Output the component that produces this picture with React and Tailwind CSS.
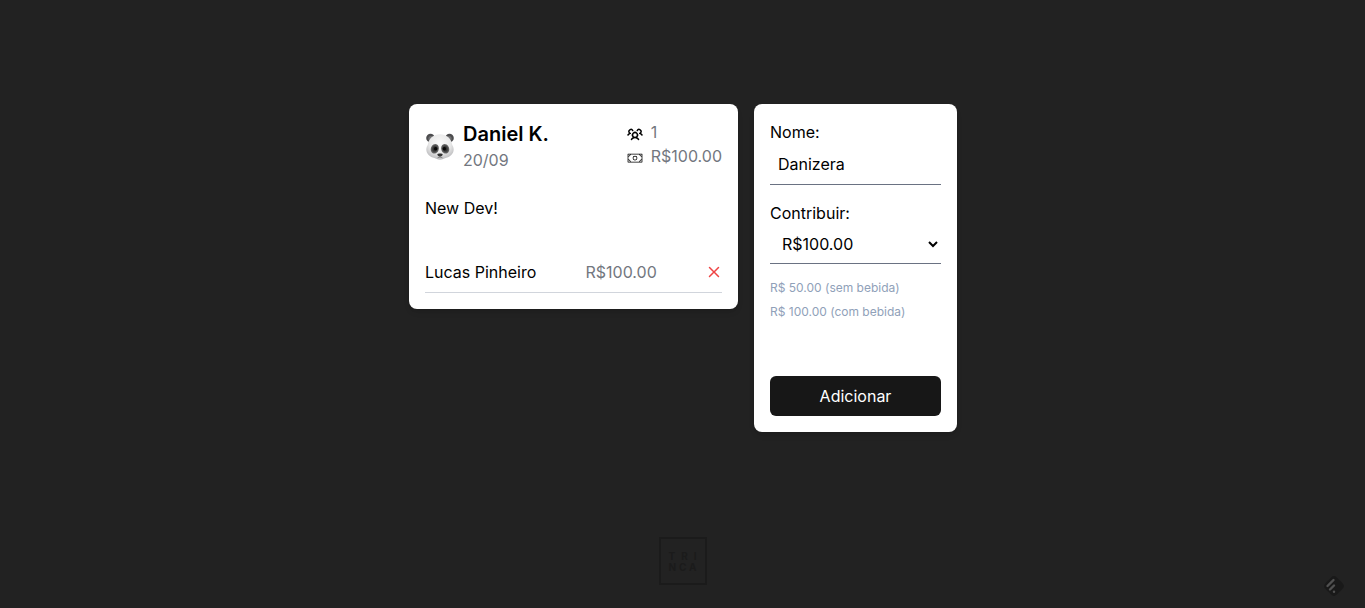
import { useState } from 'react';
import { PiUsersThreeBold, PiMoneyLight, PiXBold } from 'react-icons/pi';

function Panda() {
  return (
    <svg viewBox="0 0 30 30" className="size-[30px] shrink-0" role="img" aria-label="Panda">
      <defs>
        <radialGradient id="fur" cx="50%" cy="35%" r="65%">
          <stop offset="0" stopColor="#fafafa" />
          <stop offset="0.6" stopColor="#e8e8e8" />
          <stop offset="1" stopColor="#bcbcbe" />
        </radialGradient>
        <radialGradient id="patch">
          <stop offset="0" stopColor="#1a1a1a" />
          <stop offset="0.5" stopColor="#3a3a3a" />
          <stop offset="1" stopColor="#707070" />
        </radialGradient>
      </defs>
      <circle cx="5.5" cy="7" r="4.3" fill="#4c4c4e" />
      <circle cx="24.5" cy="7" r="4.3" fill="#4c4c4e" />
      <circle cx="6" cy="7.5" r="2.6" fill="#707072" />
      <circle cx="24" cy="7.5" r="2.6" fill="#707072" />
      <path d="M15 3.200C21.500 3.200 26.200 7.500 27 13c.3 1.600 1.700 3 1.700 5.200 0 4.600-3.700 7.900-8.100 8.700-1.600.3-3.100 1.800-5.600 1.800s-4-1.500-5.600-1.800C5 26.100 1.300 22.800 1.300 18.200c0-2.200 1.400-3.600 1.700-5.200C3.800 7.500 8.500 3.200 15 3.200z" fill="url(#fur)" />
      <ellipse cx="9.800" cy="17.800" rx="4" ry="4.900" fill="url(#patch)" transform="rotate(20 9.800 17.800)" />
      <ellipse cx="20.200" cy="17.800" rx="4" ry="4.900" fill="url(#patch)" transform="rotate(-20 20.200 17.800)" />
      <circle cx="10.700" cy="17.800" r="1.700" fill="#050505" />
      <circle cx="19.300" cy="17.800" r="1.700" fill="#050505" />
      <path d="M12.300 23.300c0-1.200 5.400-1.200 5.400 0 0 1.300-1.700 2.500-2.700 2.500s-2.700-1.200-2.700-2.500z" fill="#333" />
      <path d="M12.500 26.800q2.500-1.300 5 0" stroke="#777" strokeWidth="0.800" fill="none" />
    </svg>
  );
}

function EventCard() {
  return (
    <section className="rounded-lg bg-white p-4 shadow-md">
      <header className="flex items-start justify-between">
        <div className="flex items-center gap-2">
          <Panda />
          <div>
            <h1 className="text-xl font-semibold">Daniel K.</h1>
            <p className="text-[#737780]">20/09</p>
          </div>
        </div>
        <div className="text-[#737780]">
          <p className="flex items-center gap-2">
            <PiUsersThreeBold className="mt-1 size-4 text-black" aria-label="Participantes" />1
          </p>
          <p className="flex items-center gap-2">
            <PiMoneyLight className="mt-1 size-4 text-black" aria-label="Total" />
            R$100.00
          </p>
        </div>
      </header>
      <p className="mt-6">New Dev!</p>
      <ul className="mt-10">
        <li className="flex items-center justify-between border-b border-gray-300 pb-2">
          <span>Lucas Pinheiro</span>
          <span className="text-[#737780]">R$100.00</span>
          <button type="button" aria-label="Remover" className="text-[#ef4444]">
            <PiXBold className="size-4" />
          </button>
        </li>
      </ul>
    </section>
  );
}

function ContributionForm() {
  const [name, setName] = useState('Danizera');
  const [amount, setAmount] = useState('100');
  return (
    <form className="flex flex-col rounded-lg bg-white p-4 shadow-md" onSubmit={(e) => e.preventDefault()}>
      <label htmlFor="name">Nome:</label>
      <input
        id="name"
        type="text"
        value={name}
        onChange={(e) => setName(e.target.value)}
        className="w-full min-w-0 border-b border-gray-500 p-2 outline-none"
      />
      <label htmlFor="amount" className="mt-4">Contribuir:</label>
      <select
        id="amount"
        value={amount}
        onChange={(e) => setAmount(e.target.value)}
        className="h-[39px] w-full border-b border-gray-500 bg-white px-2 outline-none"
      >
        <option value="50">R$50.00</option>
        <option value="100">R$100.00</option>
      </select>
      <div className="mt-3 text-xs/6 text-slate-400">
        <p>R$ 50.00 (sem bebida)</p>
        <p>R$ 100.00 (com bebida)</p>
      </div>
      <button type="submit" className="mt-13 h-10 rounded-md bg-[#171717] text-white">
        Adicionar
      </button>
    </form>
  );
}

function Logo() {
  return (
    <div className="flex size-12 flex-col items-center justify-center border-2 border-[#1b1b1b] pt-0.5 text-[10px]/[11px] font-bold text-[#1b1b1b]">
      <div className="flex w-7 justify-between"><span>T</span><span>R</span><span>I</span></div>
      <div className="flex w-7 justify-between"><span>N</span><span>C</span><span>A</span></div>
    </div>
  );
}

export default function App() {
  return (
    <div className="relative flex min-h-screen flex-col bg-[#222222] font-['Inter',sans-serif] text-base font-normal text-black">
      <main className="flex flex-1 items-center justify-center pb-px pl-px">
        <div className="grid w-full max-w-[548px] grid-cols-[329fr_203fr] items-start gap-4">
          <EventCard />
          <ContributionForm />
        </div>
      </main>
      <footer className="flex justify-center pb-[23px]">
        <Logo />
      </footer>
      <svg viewBox="0 0 26 26" className="absolute right-[18px] bottom-[9px] size-[26px]" aria-hidden="true">
        <rect x="5" y="5" width="16" height="16" rx="4" fill="#191919" transform="rotate(45 13 13)" />
        <path d="M6.500 13l6-6M9 16.500l4-4" stroke="#505050" strokeWidth="2.400" strokeLinecap="round" />
        <circle cx="13" cy="18.700" r="1.200" fill="#505050" />
      </svg>
    </div>
  );
}
